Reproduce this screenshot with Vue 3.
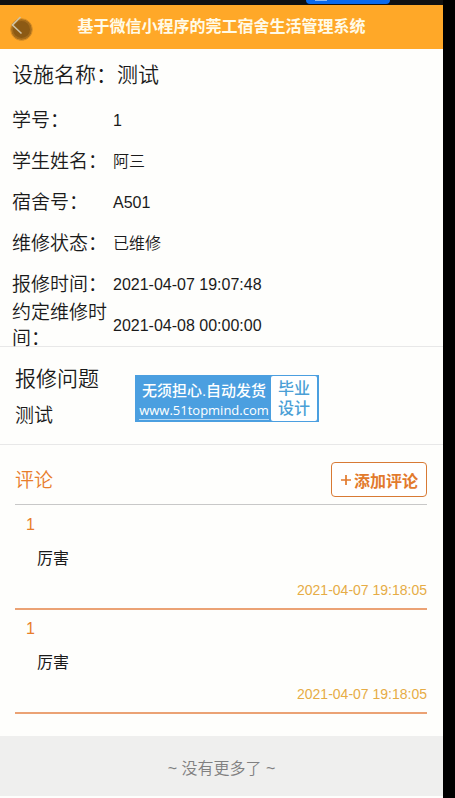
<script setup>
const title = '基于微信小程序的莞工宿舍生活管理系统'
const facility = '测试'
const problem = '测试'

const fields = [
  { label: '学号：', value: '1' },
  { label: '学生姓名：', value: '阿三' },
  { label: '宿舍号：', value: 'A501' },
  { label: '维修状态：', value: '已维修' },
  { label: '报修时间：', value: '2021-04-07 19:07:48' },
  { label: '约定维修时间：', value: '2021-04-08 00:00:00' },
]

const comments = [
  { id: 1, user: '1', text: '厉害', time: '2021-04-07 19:18:05' },
  { id: 2, user: '1', text: '厉害', time: '2021-04-07 19:18:05' },
]
</script>

<template>
  <div class="window">
    <div class="strip"><span class="pill"><i></i></span></div>
    <div class="screen">
      <header class="bar">
        <button class="back" type="button" aria-label="返回">
          <svg viewBox="0 0 24 26" width="24" height="26" aria-hidden="true">
            <circle cx="12.5" cy="15.5" r="10.8" fill="#a56c1b" stroke="#d98f26" stroke-width="1" />
            <circle cx="12.5" cy="15.5" r="8.5" fill="#8c5a14" />
            <path d="M11.5 3 L3.5 11 L12.5 19.5" fill="none" stroke="#cfc2a4" stroke-width="1.6" />
          </svg>
        </button>
        <h1>{{ title }}</h1>
      </header>

      <section class="info">
        <h2 class="name">设施名称：{{ facility }}</h2>
        <dl>
          <div v-for="f in fields" :key="f.label" class="row">
            <dt>{{ f.label }}</dt>
            <dd>{{ f.value }}</dd>
          </div>
        </dl>
      </section>

      <section class="problem">
        <h2>报修问题</h2>
        <p>{{ problem }}</p>
        <div class="stamp">
          <div class="stamp-main">
            <span class="slogan">无须担心.自动发货</span>
            <span class="site">www.51topmind.com</span>
          </div>
          <div class="stamp-side"><span>毕业</span><span>设计</span></div>
        </div>
      </section>

      <section class="comments">
        <div class="head">
          <h2>评论</h2>
          <button class="add" type="button">
            <svg viewBox="0 0 12 12" width="12" height="12" aria-hidden="true">
              <path d="M6 1V11M1 6H11" stroke="currentColor" stroke-width="1.7" />
            </svg>添加评论
          </button>
        </div>
        <article v-for="c in comments" :key="c.id" class="comment">
          <span class="user">{{ c.user }}</span>
          <p>{{ c.text }}</p>
          <time>{{ c.time }}</time>
        </article>
      </section>

      <footer class="end">~ 没有更多了 ~</footer>
    </div>
  </div>
</template>

<style>
body {
  background: #000;
}
</style>

<style scoped>
.window {
  min-height: 100vh;
  box-sizing: border-box;
  padding-right: 12px;
  display: flex;
  flex-direction: column;
  font-family: "Liberation Sans", "Noto Sans CJK SC", sans-serif;
  font-weight: 350;
  color: #1a1a1a;
}
h1, h2, p, dl, dd {
  margin: 0;
  font-weight: inherit;
}
.strip {
  height: 5px;
  background: #111;
  display: flex;
  justify-content: flex-end;
}
.pill {
  width: 84px;
  height: 4px;
  margin-right: 53px;
  border-radius: 0 0 8px 8px;
  background: #0969ee;
}
.pill i {
  display: block;
  width: 12px;
  height: 1px;
  margin-left: 9px;
  background: #8dbbf8;
}
.screen {
  flex: 1;
  background: #fefefc;
}
.bar {
  height: 44px;
  padding: 0 9px;
  display: grid;
  grid-template-columns: 24px 1fr 24px;
  align-items: center;
  background: #ffa828;
}
.back {
  height: 26px;
  padding: 0;
  border: 0;
  background: none;
}
.back svg {
  display: block;
  overflow: visible;
}
.bar h1 {
  font-size: 16px;
  line-height: 24px;
  font-weight: 700;
  text-align: center;
  white-space: nowrap;
  color: #fffbe8;
}
.info {
  border-bottom: 1px solid #e8e8e8;
}
.name {
  padding: 0 12px;
  font-size: 21px;
  line-height: 51px;
}
.row {
  height: 41px;
  padding: 0 12px;
  display: grid;
  grid-template-columns: 96px 1fr;
  column-gap: 5px;
  align-items: center;
  align-content: center;
}
dt {
  font-size: 19px;
  line-height: 26px;
}
dd {
  font-size: 16px;
  line-height: 26px;
}
.problem {
  position: relative;
  padding: 16px 15px 14px;
  border-bottom: 1px solid #e8e8e8;
}
.problem h2 {
  font-size: 21px;
  line-height: 32px;
}
.problem p {
  margin-top: 6px;
  font-size: 19px;
  line-height: 29px;
}
.stamp {
  position: absolute;
  left: 135px;
  top: 28px;
  width: 184px;
  height: 47px;
  box-sizing: border-box;
  padding: 1px 2px;
  display: flex;
  background: #4b9fe0;
  color: #fff;
}
.stamp-main {
  flex: 1;
  display: flex;
  flex-direction: column;
  align-items: center;
  padding-top: 4px;
}
.slogan {
  font-size: 15px;
  line-height: 22px;
  font-weight: 500;
}
.site {
  font-family: "Open Sans", "Noto Sans", sans-serif;
  font-size: 13px;
  line-height: 17px;
  font-weight: 500;
  border-bottom: 1px solid #b5d8f4;
}
.stamp-side {
  flex: none;
  width: 46px;
  display: flex;
  flex-direction: column;
  align-items: center;
  justify-content: center;
  border-radius: 2px;
  background: #fff;
  color: #4b9fd6;
  font-size: 16px;
  line-height: 20px;
  font-weight: 500;
}
.comments {
  padding: 17px 16px 22px 15px;
}
.head {
  display: flex;
  align-items: center;
  justify-content: space-between;
  margin-bottom: 1px;
  padding-bottom: 7px;
  border-bottom: 1px solid #c8c8c8;
}
.head h2 {
  padding-top: 2px;
  font-size: 19px;
  line-height: 29px;
  color: #e87d2b;
}
.add {
  height: 35px;
  width: 96px;
  padding: 0;
  display: flex;
  align-items: center;
  justify-content: center;
  gap: 2px;
  border: 1px solid #d87a35;
  border-radius: 4px;
  background: #fff;
  color: #e27a2c;
  font-family: inherit;
  font-size: 16px;
  font-weight: 700;
}
.comment {
  display: flex;
  flex-direction: column;
  padding: 7px 0;
  border-bottom: 2px solid #eba274;
}
.user {
  padding-left: 11px;
  font-size: 16px;
  line-height: 24px;
  color: #e87d2b;
}
.comment p {
  padding: 10px 22px 8px;
  font-size: 16px;
  line-height: 24px;
  font-weight: 400;
}
time {
  align-self: flex-end;
  font-size: 14px;
  line-height: 22px;
  color: #e6ac45;
}
.end {
  height: 59px;
  display: flex;
  align-items: center;
  justify-content: center;
  padding-top: 1px;
  background: #efefee;
  color: #808080;
  font-size: 16px;
}
</style>
